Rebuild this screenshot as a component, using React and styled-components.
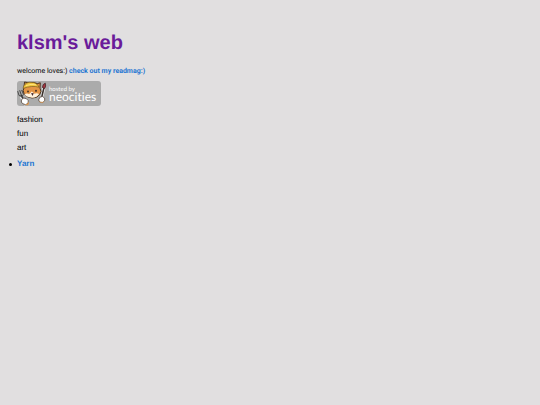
import React from "react";
import styled, { createGlobalStyle } from "styled-components";

const topics = ["fashion", "fun", "art"];

const NeocitiesBadge = () => (
  <svg width="84" height="25" viewBox="0 0 84 25" aria-hidden="true">
    <rect width="84" height="25" rx="3" fill="#ababab" />
    {/* fork */}
    <path d="M4 15l5 9" stroke="#ececec" strokeWidth="3" />
    <path d="M4 14l4 7" stroke="#333" strokeWidth="1.6" />
    <path
      d="M0.8 10.5l1.2 4 3 1 1.5-2.2-1.7-4M2.8 9.6l1.4 4.2"
      fill="none"
      stroke="#4a4a4a"
      strokeWidth="1"
      strokeLinecap="round"
    />
    {/* paint brush */}
    <path d="M24.5 17l2.4-10" stroke="#eee" strokeWidth="3" />
    <path d="M24.5 17l2.4-10" stroke="#39302c" strokeWidth="1.5" />
    <path
      d="M25.5 6.5q0-3.5 2.8-4.3 1 3-.6 5.3z"
      fill="#a93642"
      stroke="#442426"
      strokeWidth="0.8"
    />
    {/* head */}
    <path
      d="M7 6.5L7.5 1l4.8 1q4.6-1.3 8 .6l3-.8-.3 5.4q2.2 3.2-.3 6.4-2.7 3.7-7.7 3.4-5.6-.3-8-4.5-1.6-3 0-6z"
      fill="#e39445"
      stroke="#493524"
      strokeWidth="1"
      strokeLinejoin="round"
    />
    <path
      d="M7.6 13.6q2.2-1.8 4.4-.4l2.8-2.6 2.6 2.1q2.2-1 4.6.3-2 3.6-6.8 3.7-5.2-.2-7.6-3.1z"
      fill="#fff3df"
    />
    <path
      d="M6 7.4q.8-5 6-6.1 5.4-.8 8.4 2.2l1.6 2.7q-6.9-2-16 1.2z"
      fill="#edc43d"
      stroke="#6b4c1c"
      strokeWidth="0.6"
    />
    <path d="M9 4.6q5-2 10-.8" fill="none" stroke="#ffe37d" strokeWidth="1" />
    <ellipse cx="11" cy="10.5" rx="0.8" ry="1.1" fill="#30231b" />
    <ellipse cx="19" cy="9.8" rx="0.8" ry="1.1" fill="#30231b" />
    <path d="M14 12.3l2.8-.3-1.2 2.9z" fill="#492a2c" />
    {/* paws */}
    <path
      d="M4.4 19q1.4-3.2 4.8-1.5 3.3 2 1.8 4.8-2.3 2.5-5.1.5-2.2-1.4-1.5-3.8z"
      fill="#fff"
      stroke="#514036"
      strokeWidth="0.8"
    />
    <path d="M8 23.5q3 0 3.2-3l1 2.2-2 1.8z" fill="#dc9850" />
    <path
      d="M21.8 18.4q.7-3.4 3.8-2.9 3 1.2 2.1 4.2-1.7 2.7-4.4 1.6-2-.9-1.5-2.9z"
      fill="#fff"
      stroke="#514036"
      strokeWidth="0.8"
    />
    <path d="M22.2 19.9q2.4 1.8 5.2.3-1.2 1.8-3.2 1.5-1.5-.3-2-1.8z" fill="#e5a157" />
    <BadgeText x="32" y="10" fontSize="6">
      hosted by
    </BadgeText>
    <BadgeText x="32" y="20" fontSize="12">
      neocities
    </BadgeText>
  </svg>
);

const App = () => {
  return (
    <>
      <GlobalStyle />
      <Page>
        <Title>klsm's web</Title>
        <Intro>
          welcome loves:) <TextLink href="#readmag">check out my readmag:)</TextLink>
        </Intro>
        <BadgeLink href="#neocities" aria-label="hosted by neocities">
          <NeocitiesBadge />
        </BadgeLink>
        {topics.map((topic) => (
          <Topic key={topic}>{topic}</Topic>
        ))}
        <LinkList>
          <LinkItem>
            <TextLink href="#yarn">Yarn</TextLink>
          </LinkItem>
        </LinkList>
      </Page>
    </>
  );
};

export default App;

const GlobalStyle = createGlobalStyle`
  body {
    margin: 0;
    background-color: #e1dfe0;
    color: #000;
    font-family: "Liberation Sans", Arial, sans-serif;
  }
`;

const Page = styled.main`
  padding: 31px 17px;
  font-size: 8px;
  line-height: 14px;
  text-rendering: geometricPrecision;
`;

const Title = styled.h1`
  margin: 0 0 11px;
  color: #6a1b9a;
  font-size: 20px;
  line-height: 24px;
`;

const Intro = styled.p`
  margin: 0 0 5px;
  font-family: Roboto, "Liberation Sans", sans-serif;
  font-size: 7px;
  line-height: 10px;
`;

const TextLink = styled.a`
  color: #1f76d2;
  font-weight: bold;
  text-decoration: none;
`;

const BadgeLink = styled.a`
  display: block;
  width: fit-content;
  margin-bottom: 7px;

  svg {
    display: block;
  }
`;

const BadgeText = styled.text`
  fill: #fff;
  font-family: Lato, "Open Sans", sans-serif;
  font-variant-ligatures: none;
`;

const Topic = styled.p`
  margin: 0;
`;

const LinkList = styled.ul`
  margin: 2px 0 0 -8px;
  padding: 0;
  list-style: none;
`;

const LinkItem = styled.li`
  display: flex;
  align-items: center;
  gap: 5px;

  &::before {
    content: "";
    width: 3px;
    height: 3px;
    border-radius: 50%;
    background-color: #000;
  }
`;
